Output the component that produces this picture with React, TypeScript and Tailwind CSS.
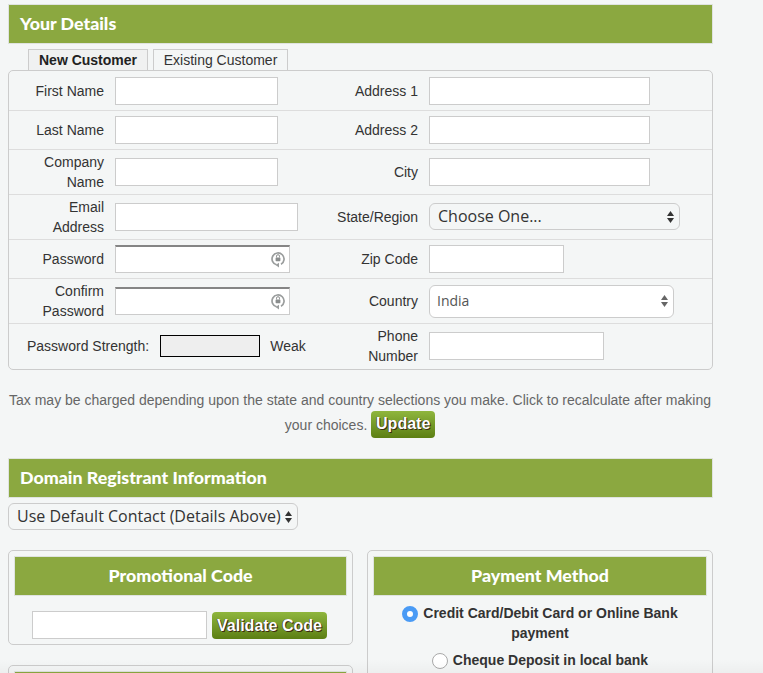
import React from 'react';

const headingFont = "font-['Lato','Open_Sans',sans-serif] font-black";
const selectFont = "font-['Open_Sans',sans-serif]";

const Arrows: React.FC<{ color?: string }> = ({ color = '#333' }) => (
  <svg width="9" height="14" viewBox="0 0 9 14" className="absolute top-1/2 right-[5px] -translate-y-1/2 pointer-events-none">
    <path d="M4.5 1 L8 6 L1 6 Z" fill={color} />
    <path d="M4.5 13 L8 8 L1 8 Z" fill={color} />
  </svg>
);

const KeyIcon: React.FC = () => (
  <svg width="14" height="17" viewBox="0 0 14 17" className="absolute top-[6px] right-[5px]" fill="none">
    <path d="M10 13.2 A6 6 0 1 0 5.6 13.8" stroke="#9a9d9d" strokeWidth="1.7" />
    <path d="M8 11.8 L4.6 14 L8 16.4 Z" fill="#9a9d9d" />
    <rect x="4.6" y="6.4" width="4.8" height="3.8" rx="0.7" fill="#8a8d8d" />
    <path d="M5.5 6.4 V5.2 A1.5 1.5 0 0 1 8.5 5.2 V6.4" stroke="#8a8d8d" strokeWidth="1" />
  </svg>
);

const Field: React.FC<{ width: string; type?: string }> = ({ width, type = 'text' }) => (
  <input type={type} className={`${width} h-[28px] bg-white border border-[#cccccc] outline-none`} />
);

const PasswordField: React.FC = () => (
  <div className="relative w-[175px] h-[28px]">
    <input
      type="password"
      className="w-full h-full bg-white border border-[#cccccc] border-t-2 border-t-[#858585] outline-none"
    />
    <KeyIcon />
  </div>
);

const Select: React.FC<{ width: string; height: string; text: string; className?: string; arrow?: string }> = ({ width, height, text, className, arrow }) => (
  <div className={`relative ${width} ${height}`}>
    <select
      defaultValue={text}
      className={`w-full h-full appearance-none rounded-[6px] border border-[#cccccc] pb-[2px] outline-none ${selectFont} ${className}`}
    >
      <option>{text}</option>
    </select>
    <Arrows color={arrow} />
  </div>
);

const Row: React.FC<{
  height: string;
  last?: boolean;
  left: React.ReactNode;
  right: React.ReactNode;
}> = ({ height, last, left, right }) => (
  <div className={`grid grid-cols-[306px_1fr] items-center ${height} ${last ? '' : 'border-b border-[#dddddd]'}`}>
    {left}
    {right}
  </div>
);

const LeftCell: React.FC<{ label: React.ReactNode; children: React.ReactNode }> = ({ label, children }) => (
  <div className="flex items-center gap-[11px]">
    <label className="w-[95px] text-right leading-[20px]">{label}</label>
    {children}
  </div>
);

const RightCell: React.FC<{ label: React.ReactNode; children: React.ReactNode }> = ({ label, children }) => (
  <div className="flex items-center gap-[11px]">
    <label className="w-[103px] text-right leading-[20px]">{label}</label>
    {children}
  </div>
);

const SectionBar: React.FC<{ title: string; height?: string; center?: boolean }> = ({ title, height = 'h-[40px]', center }) => (
  <div className={`${height} flex items-center pb-[2px] bg-[#8ba840] border border-[#dfe3df] text-white text-[17.8px] ${headingFont} ${center ? 'justify-center' : 'pl-[11px]'}`}>
    {title}
  </div>
);

const GreenButton: React.FC<{ text: string; className: string }> = ({ text, className }) => (
  <button
    type="button"
    className={`${className} rounded-[4px] bg-gradient-to-b from-[#8fb63d] to-[#5c7f12] text-white font-bold text-[16px] leading-none [text-shadow:1px_1px_0_#3a2a10,-0.5px_0_0_#3a2a10]`}
  >
    {text}
  </button>
);

const Radio: React.FC<{ checked?: boolean }> = ({ checked }) => (
  <input
    type="radio"
    readOnly
    checked={!!checked}
    className={`appearance-none w-[16px] h-[16px] rounded-full align-[-4px] mr-[5px] ${checked ? 'border-[5px] border-[#4a9bf5] bg-white' : 'border border-[#a9a9a9] bg-white'}`}
  />
);

const App: React.FC = () => {
  return (
    <div className="relative h-[673px] overflow-hidden bg-[#f4f6f6] text-[#333333] text-[14px] font-['Liberation_Sans',Arial,sans-serif]">
      <div className="w-[705px] ml-[8px] pt-[4px]">
        <SectionBar title="Your Details" />

        <div className="flex gap-[5px] pl-[20px] mt-[5px] h-[21px]">
          <div className="w-[120px] flex items-center justify-center bg-[#f0f1f1] border border-b-0 border-[#cccccc] font-bold text-[#222222]">
            New Customer
          </div>
          <div className="w-[135px] flex items-center justify-center border border-b-0 border-[#cccccc]">
            Existing Customer
          </div>
        </div>

        <div className="border border-[#cccccc] rounded-[5px] h-[300px]">
          <Row
            height="h-[40px]"
            left={<LeftCell label="First Name"><Field width="w-[163px]" /></LeftCell>}
            right={<RightCell label="Address 1"><Field width="w-[221px]" /></RightCell>}
          />
          <Row
            height="h-[39px]"
            left={<LeftCell label="Last Name"><Field width="w-[163px]" /></LeftCell>}
            right={<RightCell label="Address 2"><Field width="w-[221px]" /></RightCell>}
          />
          <Row
            height="h-[45px]"
            left={<LeftCell label={<>Company<br />Name</>}><Field width="w-[163px]" /></LeftCell>}
            right={<RightCell label="City"><Field width="w-[221px]" /></RightCell>}
          />
          <Row
            height="h-[45px]"
            left={<LeftCell label={<>Email<br />Address</>}><Field width="w-[183px]" /></LeftCell>}
            right={
              <RightCell label="State/Region">
                <Select width="w-[251px]" height="h-[27px] -mt-[1px]" text="Choose One..." className="pl-[8px] bg-[#f4f6f6] text-[16px] text-[#333333]" />
              </RightCell>
            }
          />
          <Row
            height="h-[39px]"
            left={<LeftCell label="Password"><PasswordField /></LeftCell>}
            right={<RightCell label="Zip Code"><Field width="w-[135px]" /></RightCell>}
          />
          <Row
            height="h-[45px]"
            left={<LeftCell label={<>Confirm<br />Password</>}><PasswordField /></LeftCell>}
            right={
              <RightCell label="Country">
                <Select width="w-[245px]" height="h-[33px]" text="India" arrow="#666" className="pl-[7px] bg-white text-[14px] text-[#555555]" />
              </RightCell>
            }
          />
          <Row
            last
            height="h-[44px]"
            left={
              <div className="flex items-center pl-[18px]">
                <span>Password Strength:</span>
                <div className="w-[100px] h-[22px] ml-[11px] bg-[#eeeeee] border border-black" />
                <span className="ml-[10px]">Weak</span>
              </div>
            }
            right={<RightCell label={<>Phone<br />Number</>}><Field width="w-[175px]" /></RightCell>}
          />
        </div>

        <div className="h-[70px] pt-[18px] pr-[1px] text-center text-[#666666] leading-[25px]">
          <p>Tax may be charged depending upon the state and country selections you make. Click to recalculate after making</p>
          <p>
            your choices. <GreenButton text="Update" className="w-[64px] h-[27px] align-middle -mt-[4px]" />
          </p>
        </div>

        <div className="mt-[18px]">
          <SectionBar title="Domain Registrant Information" />
        </div>

        <div className="mt-[5px]">
          <Select width="w-[290px]" height="h-[27px]" text="Use Default Contact (Details Above)" className="pl-[8px] bg-[#f4f6f6] text-[16px] text-[#333333]" />
        </div>

        <div className="grid grid-cols-[345px_346px] gap-x-[14px] mt-[20px] items-start">
          <div className="flex flex-col gap-[20px]">
            <div className="h-[95px] border border-[#cccccc] rounded-[5px] p-[5px]">
              <SectionBar title="Promotional Code" center />
              <div className="flex items-center pl-[18px] gap-[5px] mt-[15px]">
                <Field width="w-[175px]" />
                <GreenButton text="Validate Code" className="w-[115px] h-[27px] mt-[1px]" />
              </div>
            </div>
            <div className="h-[95px] border border-[#cccccc] rounded-[5px] p-[5px]">
              <SectionBar title="" center />
            </div>
          </div>

          <div className="h-[240px] border border-[#cccccc] rounded-[5px] p-[5px]">
            <SectionBar title="Payment Method" center />
            <div className="text-center font-bold text-[#333333] leading-[20px] mt-[7px] px-[20px]">
              <p><Radio checked />Credit Card/Debit Card or Online Bank payment</p>
              <p className="mt-[7px]"><Radio />Cheque Deposit in local bank</p>
            </div>
          </div>
        </div>
      </div>
      <div className="absolute inset-x-0 bottom-0 h-[14px] bg-gradient-to-b from-transparent to-black/[0.03] pointer-events-none" />
    </div>
  );
};

export default App;
